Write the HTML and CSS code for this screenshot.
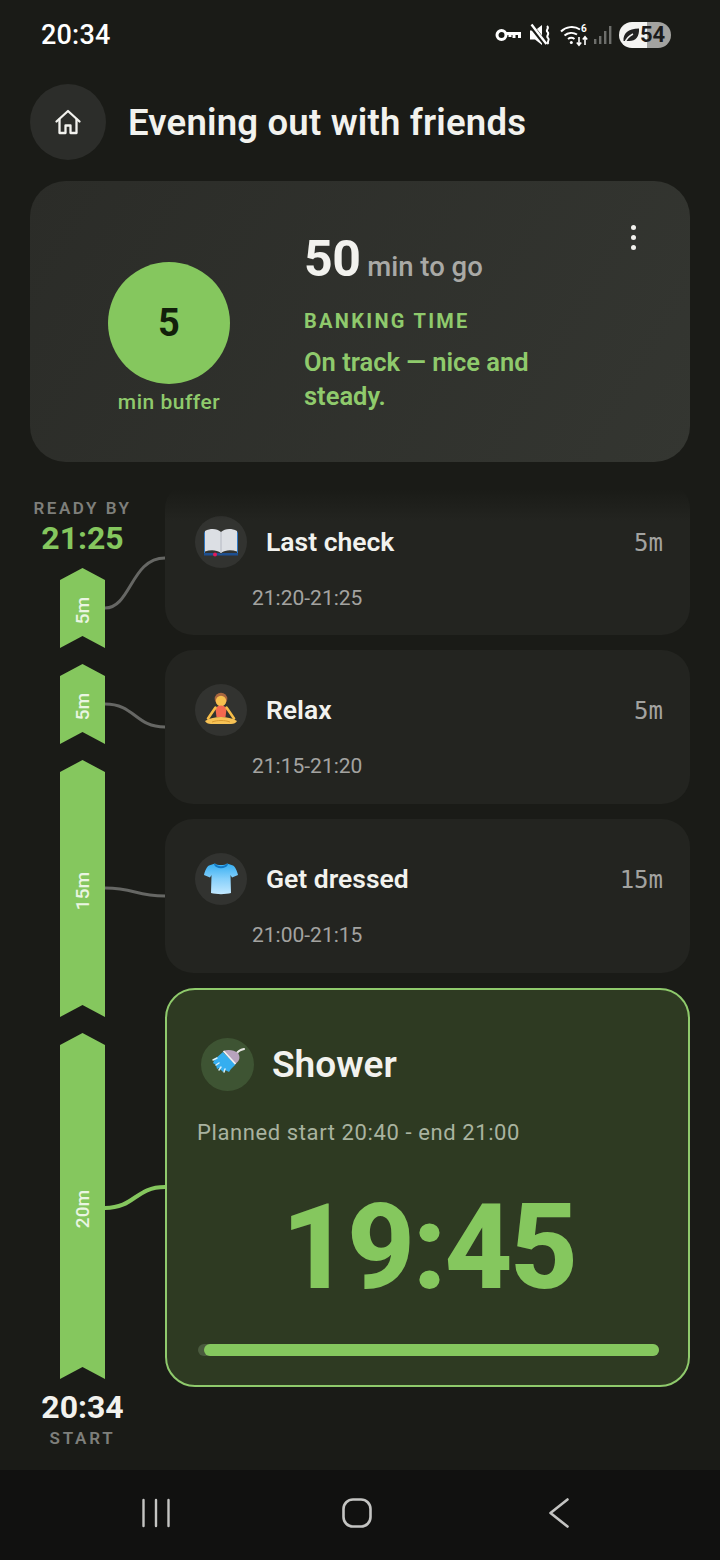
FILE: index.html
```html
<!DOCTYPE html>
<html lang="en">
<head>
    <meta charset="UTF-8">
    <meta name="viewport" content="width=device-width, initial-scale=1.0">
    <title>Evening out with friends</title>
    <link rel="stylesheet" href="styles.css">
</head>
<body>
    <div class="status-bar">
        <span class="clock">20:34</span>
        <div class="status-icons">
            <svg class="ic-key" viewBox="0 0 26 16" width="26" height="16" fill="none" stroke="#fff">
                <circle cx="6.500" cy="8" r="4.500" stroke-width="3"/>
                <path d="M11 6.500h13.500v4.500M19 7v4M15 7v3" stroke-width="3"/>
            </svg>
            <svg class="ic-mute" viewBox="0 0 23 24" width="23" height="24">
                <path d="M0 7.500h5L12 2v20l-7-5.500H0z" fill="#fff"/>
                <path d="M1 2.500l15 19" stroke="#1a1b17" stroke-width="5"/>
                <path d="M1.500 1.500l15 19.500" stroke="#fff" stroke-width="2.400"/>
                <path d="M17 3c3 2.500-2 4 .5 6s-2 4 .5 6-2 3.500.5 6" fill="none" stroke="#fff" stroke-width="2"/>
            </svg>
            <svg class="ic-wifi" viewBox="0 0 30 24" width="30" height="24" fill="none" stroke="#fff" stroke-width="2">
                <path d="M1 8.500C6 3.500 14 2.500 20 6.500M4.500 12.500C8 9.500 13 9 17 11.500M8 16c2-1.500 4.500-1.500 6.500 0"/>
                <circle cx="11.300" cy="19.500" r="1.500" fill="#fff" stroke="none"/>
                <path d="M19 14v8M16.800 19.500l2.200 2.700 2.200-2.700M25 22v-8M22.800 16.500l2.200-2.700 2.200 2.700" stroke-width="1.600"/>
                <text x="21" y="9" class="wifi-six">6</text>
            </svg>
            <svg class="ic-signal" viewBox="0 0 20 20" width="20" height="20" fill="#6d6e6b">
                <rect x="1" y="14" width="2.400" height="5"/>
                <rect x="6" y="11" width="2.400" height="8"/>
                <rect x="11" y="6" width="2.400" height="13"/>
                <rect x="16" y="1" width="2.400" height="18"/>
            </svg>
            <div class="battery">
                <svg viewBox="0 0 18 18" width="18" height="18">
                    <path d="M1.500 15C1 7.500 6 2.500 17 2.500c.5 8.500-3.500 13-11 12.500z" fill="#222"/>
                    <path d="M3 17c1-4 4-7 8-9" fill="none" stroke="#f4f4f2" stroke-width="1.500"/>
                </svg>
                <span>54</span>
            </div>
        </div>
    </div>

    <header class="page-header">
        <div class="home-btn">
            <svg viewBox="0 0 28 28" width="28" height="28" fill="none" stroke="#f2f2ee" stroke-width="2.300" stroke-linejoin="round" stroke-linecap="round">
                <path d="M2.500 13.500L14 3l11.500 10.500"/>
                <path d="M5.500 11.500V25h6v-7.500h5V25h6V11.500"/>
            </svg>
        </div>
        <h1>Evening out with friends</h1>
    </header>

    <section class="summary">
        <div class="buffer">
            <div class="buffer-circle">5</div>
            <div class="buffer-label">min buffer</div>
        </div>
        <div class="summary-text">
            <div class="to-go"><b>50</b> min to go</div>
            <div class="mode">BANKING TIME</div>
            <div class="message">On track — nice and steady.</div>
        </div>
        <div class="menu-dots"><i></i><i></i><i></i></div>
    </section>

    <main class="timeline">
        <div class="rail">
            <div class="rail-label">READY BY</div>
            <div class="rail-time green">21:25</div>
            <div class="segments">
                <div class="seg seg-5"><span>5m</span></div>
                <div class="seg seg-5"><span>5m</span></div>
                <div class="seg seg-15"><span>15m</span></div>
                <div class="seg seg-20"><span>20m</span></div>
            </div>
            <div class="rail-time">20:34</div>
            <div class="rail-label start">START</div>
        </div>

        <!-- connector lines, coordinates are relative to .timeline -->
        <svg class="links" viewBox="0 0 60 760" width="60" height="760" fill="none">
            <path d="M0 127C26 127 26 77 60 77" stroke="#666764" stroke-width="3"/>
            <path d="M0 223C30 223 30 246 60 246" stroke="#666764" stroke-width="3"/>
            <path d="M0 407C30 407 30 415 60 415" stroke="#666764" stroke-width="3"/>
            <path d="M0 727C30 727 30 706 60 706" stroke="#85c75e" stroke-width="4"/>
        </svg>

        <div class="tasks">
            <div class="fade"></div>
            <article class="task">
                <div class="task-top">
                    <div class="emoji">
                        <svg viewBox="0 0 36 30" width="36" height="30">
                            <path d="M1 6l1-2v22h15l1 2 1-2h15V4l1 2v22H1z" fill="#2f78c4"/>
                            <path d="M2 24.500V4C8 1 14 1.500 18 5c4-3.500 10-4 16-1v20.500c-6-2-12-1.500-16 1.500-4-3-10-3.500-16-1.500z" fill="#dcdfe4"/>
                            <path d="M18 5v21" stroke="#b4b8c2" stroke-width="1"/>
                            <path d="M1 26h16l1 2 1-2h16v2.500H1z" fill="#1d4f91"/>
                            <circle cx="12" cy="27.500" r="2" fill="#e0195c"/>
                        </svg>
                    </div>
                    <h2>Last check</h2>
                    <span class="dur">5m</span>
                </div>
                <div class="task-time">21:20-21:25</div>
            </article>
            <article class="task">
                <div class="task-top">
                    <div class="emoji">
                        <svg viewBox="0 0 36 36" width="36" height="36">
                            <circle cx="18" cy="7" r="6.300" fill="#a8663f"/>
                            <circle cx="18" cy="9" r="5.200" fill="#f7c04e"/>
                            <path d="M12.500 17c1-2.500 3-3.500 5.500-3.500s4.500 1 5.500 3.500l-1 8h-9z" fill="#f4694f"/>
                            <path d="M12.500 15.500L5 26.500M23.500 15.500L31 26.500" stroke="#f7bd48" stroke-width="2.600" stroke-linecap="round"/>
                            <path d="M2 29c5-3 10-4 16-4s11 1 16 4c-1 2-3 3-6 3H8c-3 0-5-1-6-3z" fill="#f7c255"/>
                            <path d="M9 30c5-2 13-2 18 0" stroke="#d99a30" stroke-width="1" fill="none"/>
                        </svg>
                    </div>
                    <h2>Relax</h2>
                    <span class="dur">5m</span>
                </div>
                <div class="task-time">21:15-21:20</div>
            </article>
            <article class="task">
                <div class="task-top">
                    <div class="emoji">
                        <svg viewBox="0 0 36 36" width="36" height="36">
                            <defs>
                                <linearGradient id="shirt" x1="0" y1="0" x2="0" y2="1">
                                    <stop offset="0" stop-color="#35aef2"/>
                                    <stop offset="0.5" stop-color="#86d0fb"/>
                                    <stop offset="1" stop-color="#c2e8ff"/>
                                </linearGradient>
                            </defs>
                            <path d="M12 2.500c2 2 10 2 12 0l6 2c2 1 4 5 5 9.500l-6 2.500-1.500-2.500.5 18c-5 1.500-15 1.500-20 0l.5-18L7 16.500 1 14C2 9.500 4 5.500 6 4.500z" fill="url(#shirt)"/>
                            <path d="M12 2.500c2 3.500 10 3.500 12 0l1 1c-2 5-12 5-14 0z" fill="#1278c4"/>
                        </svg>
                    </div>
                    <h2>Get dressed</h2>
                    <span class="dur">15m</span>
                </div>
                <div class="task-time">21:00-21:15</div>
            </article>
            <article class="current">
                <div class="current-top">
                    <div class="emoji emoji-current">
                        <svg viewBox="0 0 36 36" width="36" height="36">
                            <path d="M27 7c1-2 3-3 7-4" stroke="#e6e6e2" stroke-width="2.200" fill="none" stroke-linecap="round"/>
                            <path d="M13.500 5C18 3 24 4 28 7c3 5 1 8-2.500 11z" fill="#b7a3bd"/>
                            <path d="M13 6l12.500 12.500L21 23l-2 3-4-2-2 2-4-4-2 1-1-4-3-2 2-4z" fill="#35aef0"/>
                            <path d="M13.500 5l12 13" stroke="#f2f2f6" stroke-width="1.800"/>
                            <path d="M3 14l4-2M6 19l3-2M9 24l2-3M14 26l1-3" stroke="#d7f0fb" stroke-width="1.500" stroke-linecap="round"/>
                        </svg>
                    </div>
                    <h2>Shower</h2>
                </div>
                <div class="planned">Planned start 20:40 - end 21:00</div>
                <div class="countdown">19:45</div>
                <div class="progress"><div class="progress-fill"></div></div>
            </article>
        </div>
    </main>

    <nav class="nav-bar">
        <svg viewBox="0 0 30 30" width="30" height="30" stroke="#c4c4c2" stroke-width="2.400" stroke-linecap="round">
            <path d="M2.500 2v26M15 2v26M27.500 2v26"/>
        </svg>
        <svg viewBox="0 0 30 30" width="30" height="30" fill="none" stroke="#c4c4c2" stroke-width="2.600">
            <rect x="1.500" y="1.500" width="27" height="27" rx="9.500"/>
        </svg>
        <svg class="nav-back" viewBox="0 0 20 30" width="20" height="30" fill="none" stroke="#c4c4c2" stroke-width="2.600" stroke-linecap="round" stroke-linejoin="round">
            <path d="M18.500 1.500L1.500 15l17 13.500"/>
        </svg>
    </nav>
</body>
</html>
```

FILE: styles.css
```css
* {
    margin: 0;
    padding: 0;
    box-sizing: border-box;
    font-family: Roboto, 'Liberation Sans', sans-serif;
}

body {
    width: 720px;
    height: 1560px;
    background: #1a1b17;
    color: #f2f2ee;
    overflow: hidden;
    display: flex;
    flex-direction: column;
}

/* status bar */
.status-bar {
    height: 70px;
    padding: 0 49px 0 41px;
    display: flex;
    justify-content: space-between;
    align-items: center;
}

.clock {
    font-size: 27px;
    font-weight: 500;
    letter-spacing: 0.2px;
    color: #fff;
}

.status-icons {
    display: flex;
    align-items: center;
    gap: 7px;
}

.wifi-six {
    font-size: 10px;
    font-weight: 700;
    fill: #fff;
    stroke: none;
}

.ic-key {
    margin-right: 2px;
}

.ic-signal {
    margin-left: -4px;
}

.battery {
    width: 52px;
    height: 26px;
    border-radius: 13px;
    background: linear-gradient(90deg, #f4f4f2 54%, #a3a3a0 54%);
    display: flex;
    align-items: center;
    padding-left: 3px;
    margin-left: -1px;
}

.battery span {
    font-size: 22px;
    font-weight: 700;
    color: #1b1b1b;
    line-height: 26px;
}

/* header */
.page-header {
    margin: 14px 30px 0;
    height: 76px;
    display: flex;
    align-items: center;
    gap: 22px;
}

.home-btn {
    width: 76px;
    height: 76px;
    border-radius: 50%;
    background: #2c2d2a;
    display: flex;
    justify-content: center;
    align-items: center;
}

.page-header h1 {
    font-size: 36.500px;
    font-weight: 600;
    letter-spacing: 0.2px;
    color: #f2f2ee;
}

/* summary card */
.summary {
    position: relative;
    margin: 21px 30px 0;
    height: 281px;
    border-radius: 36px;
    background: linear-gradient(120deg, #2b2c28, #343631);
    display: flex;
    padding: 47px 0 0 78px;
}

.buffer {
    width: 122px;
    margin-top: 34px;
    display: flex;
    flex-direction: column;
    align-items: center;
}

.buffer-circle {
    width: 122px;
    height: 122px;
    flex-shrink: 0;
    border-radius: 50%;
    background: #85c75e;
    color: #12200a;
    font-size: 38px;
    font-weight: 700;
    display: flex;
    justify-content: center;
    align-items: center;
}

.buffer-label {
    margin-top: 6px;
    white-space: nowrap;
    font-size: 21px;
    font-weight: 500;
    letter-spacing: 0.5px;
    color: #8fca6c;
}

.summary-text {
    margin-left: 74px;
    width: 250px;
}

.to-go {
    font-size: 27.500px;
    font-weight: 500;
    color: #a9a9a6;
    line-height: 62px;
    height: 62px;
}

.to-go b {
    font-size: 50px;
    font-weight: 700;
    letter-spacing: -0.5px;
    color: #f2f2ee;
}

.mode {
    margin-top: 19px;
    font-size: 20px;
    font-weight: 700;
    letter-spacing: 2.300px;
    color: #8fca6c;
}

.message {
    margin-top: 12px;
    font-size: 25.500px;
    font-weight: 600;
    line-height: 34px;
    color: #8fca6c;
}

.menu-dots {
    position: absolute;
    top: 44px;
    right: 54px;
    display: flex;
    flex-direction: column;
    gap: 5px;
}

.menu-dots i {
    display: block;
    width: 5px;
    height: 5px;
    border-radius: 50%;
    background: #f2f2ee;
}

/* timeline */
.timeline {
    position: relative;
    flex: 1;
    margin-top: 19px;
    padding: 0 30px;
    display: flex;
    gap: 30px;
}

.rail {
    width: 105px;
    flex-shrink: 0;
    display: flex;
    flex-direction: column;
    align-items: center;
}

.rail-label {
    font-size: 17px;
    font-weight: 600;
    letter-spacing: 2.500px;
    line-height: 20px;
    color: #7e7f7b;
    margin-top: 17px;
}

.rail-label.start {
    margin-top: 2px;
    letter-spacing: 2.800px;
}

.rail-time {
    font-size: 32px;
    font-weight: 700;
    line-height: 38px;
    color: #f2f2ee;
}

.rail-time.green {
    color: #85c75e;
    margin-top: 1px;
}

.segments {
    margin: 11px 0 9px;
    display: flex;
    flex-direction: column;
    gap: 16px;
}

.seg {
    width: 45px;
    background: #85c75e;
    clip-path: polygon(50% 0, 100% 12px, 100% 100%, 50% calc(100% - 12px), 0 100%, 0 12px);
    display: flex;
    justify-content: center;
    align-items: center;
}

.seg span {
    writing-mode: vertical-rl;
    transform: rotate(180deg);
    margin-top: 6px;
    font-size: 19px;
    font-weight: 500;
    color: #eaf5e2;
}

.seg-5 { height: 80px; }
.seg-15 { height: 257px; }
.seg-20 { height: 346px; }

.links {
    position: absolute;
    left: 105px;
    top: 0;
}

.tasks {
    position: relative;
    flex: 1;
    display: flex;
    flex-direction: column;
    gap: 15px;
}

/* top of the scrolled list fades out */
.fade {
    position: absolute;
    left: 0;
    right: 0;
    top: 0;
    height: 40px;
    background: linear-gradient(#1a1b17 20%, rgba(26, 27, 23, 0));
}

.task {
    height: 154px;
    border-radius: 28px;
    background: #232420;
    padding: 34px 27px 0 30px;
}

.task:first-of-type {
    padding-top: 35px;
}

.task-top {
    display: flex;
    align-items: center;
    height: 52px;
}

.emoji {
    width: 52px;
    height: 52px;
    flex-shrink: 0;
    border-radius: 50%;
    background: #323330;
    display: flex;
    justify-content: center;
    align-items: center;
}

.task h2 {
    margin: 0 0 2px 19px;
    flex: 1;
    font-size: 26.500px;
    font-weight: 600;
    color: #f2f2ee;
}

.dur {
    margin-top: 2px;
    font-family: 'DejaVu Sans Mono', 'Liberation Mono', monospace;
    font-size: 24px;
    color: #a3a3a0;
}

.task-time {
    margin: 18px 0 0 57px;
    font-size: 21px;
    color: #a3a3a0;
}

.current {
    height: 399px;
    border-radius: 30px;
    border: 2px solid #8fca6c;
    background: #2e3a22;
    padding: 47px 29px 0 31px;
}

.current-top {
    display: flex;
    align-items: center;
    margin-left: 3px;
    height: 54px;
}

.emoji-current {
    width: 53px;
    height: 53px;
    background: #3e5433;
}

.current h2 {
    margin-left: 18px;
    font-size: 37px;
    font-weight: 600;
    color: #f2f2ee;
}

.planned {
    margin-top: 29px;
    margin-left: -1px;
    font-size: 22px;
    letter-spacing: 0.600px;
    color: #a9b3a0;
}

.countdown {
    margin-top: 33px;
    text-align: center;
    font-size: 118px;
    font-weight: 800;
    letter-spacing: -2.500px;
    line-height: 140px;
    color: #85c75e;
}

.progress {
    margin-top: 26px;
    height: 12px;
    border-radius: 6px;
    background: #4a5a3e;
}

.progress-fill {
    margin-left: 6px;
    height: 12px;
    border-radius: 6px;
    background: #85c75e;
}

/* android nav */
.nav-bar {
    height: 90px;
    flex-shrink: 0;
    background: #111110;
    padding: 0 0 4px 141px;
    display: flex;
    gap: 171px;
    align-items: center;
}

.nav-back {
    margin-left: 6px;
}
```
